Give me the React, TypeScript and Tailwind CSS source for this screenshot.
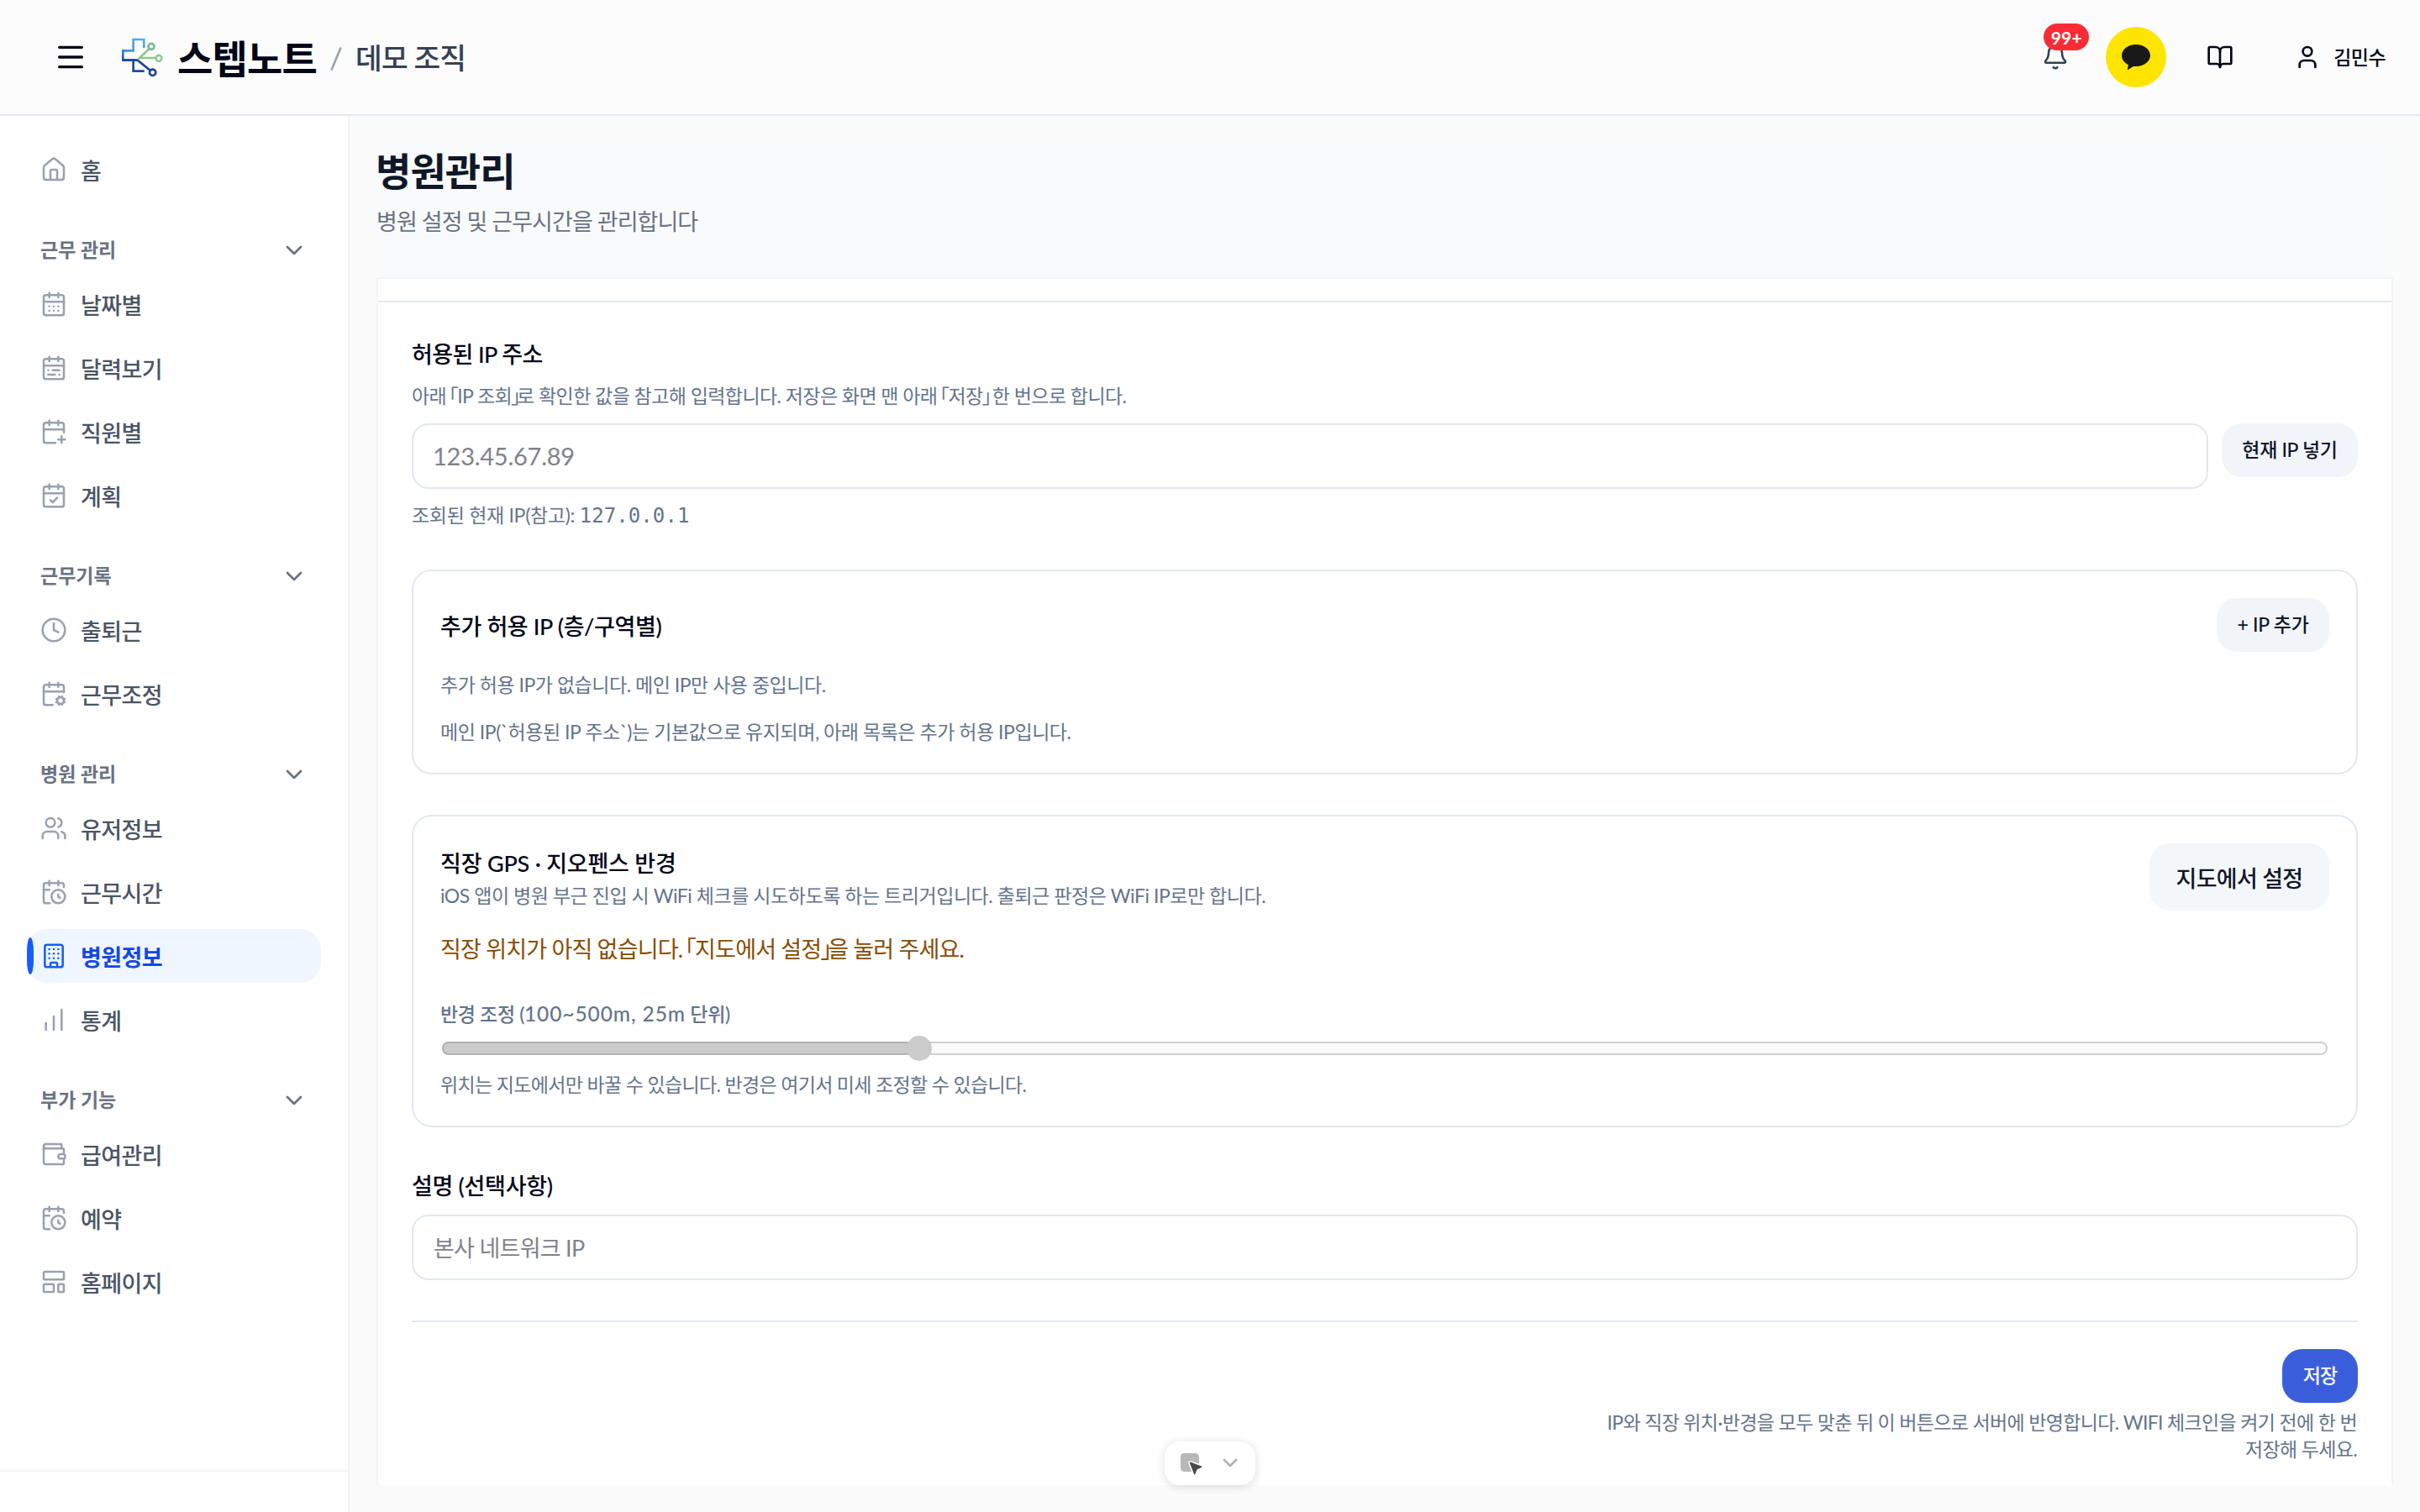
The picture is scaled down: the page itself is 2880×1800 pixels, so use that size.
import React from 'react';
import {
  Bell,
  BookOpen,
  Building,
  CalendarCheck,
  CalendarClock,
  CalendarCog,
  CalendarDays,
  CalendarPlus,
  CalendarRange,
  ChartNoAxesColumnIncreasing,
  ChevronDown,
  Clock,
  House,
  LayoutTemplate,
  Menu,
  User,
  Users,
  Wallet,
  type LucideIcon,
} from 'lucide-react';

type NavItem = { label: string; icon: LucideIcon; active?: boolean };
type NavGroup = { title: string; items: NavItem[] };

const groups: NavGroup[] = [
  {
    title: '근무 관리',
    items: [
      { label: '날짜별', icon: CalendarDays },
      { label: '달력보기', icon: CalendarRange },
      { label: '직원별', icon: CalendarPlus },
      { label: '계획', icon: CalendarCheck },
    ],
  },
  {
    title: '근무기록',
    items: [
      { label: '출퇴근', icon: Clock },
      { label: '근무조정', icon: CalendarCog },
    ],
  },
  {
    title: '병원 관리',
    items: [
      { label: '유저정보', icon: Users },
      { label: '근무시간', icon: CalendarClock },
      { label: '병원정보', icon: Building, active: true },
      { label: '통계', icon: ChartNoAxesColumnIncreasing },
    ],
  },
  {
    title: '부가 기능',
    items: [
      { label: '급여관리', icon: Wallet },
      { label: '예약', icon: CalendarClock },
      { label: '홈페이지', icon: LayoutTemplate },
    ],
  },
];

function Logo() {
  return (
    <svg viewBox="40 38 156 144" className="h-12 w-[52px]" fill="none" strokeWidth="8">
      <defs>
        <linearGradient id="cross" x1="125" y1="45" x2="48" y2="125" gradientUnits="userSpaceOnUse">
          <stop offset="0" stopColor="#4fb3ea" />
          <stop offset="0.6" stopColor="#3f9be0" />
          <stop offset="1" stopColor="#1d4fa8" />
        </linearGradient>
      </defs>
      <path d="M125 78V47H87V87H50V121H102" stroke="url(#cross)" />
      <path d="M87 121V160H126" stroke="#1c4a9e" />
      <path d="M50 121H102L147 157" stroke="#1c439c" />
      <circle cx="156" cy="165" r="11" stroke="#1c439c" />
      <path d="M103 119L144 80M106 113H166" stroke="#8cc98f" />
      <circle cx="151" cy="72" r="10.5" stroke="#84b596" />
      <circle cx="178" cy="114" r="10.5" stroke="#8fcb93" />
    </svg>
  );
}

function Header() {
  return (
    <header className="flex h-[138px] shrink-0 items-center border-b-2 border-[#e2e8f0] bg-[#fcfcfc] pr-10 pl-16 text-[#020617]">
      <Menu size={40} />
      <div className="ml-[39px]">
        <Logo />
      </div>
      <span className="ml-[16px] pt-[3px] text-[46px] leading-[64px] font-bold tracking-[-0.8px]">스텝노트</span>
      <svg viewBox="0 0 14 28" className="ml-[16px] mt-1 h-7 w-3.5" fill="none" stroke="#99a1af" strokeWidth="2.6">
        <path d="M12.6 0.5L1.4 27.5" />
      </svg>
      <span className="ml-[16px] pt-px text-[34.5px] leading-[48px] font-medium tracking-[-0.95px] text-[#364153]">
        데모 조직
      </span>

      <div className="ml-auto flex items-center">
        <div className="relative">
          <Bell size={32} strokeWidth={1.9} className="text-[#364153]" />
          <span className="absolute -top-6 left-0.5 flex h-8 w-[54px] items-center justify-center rounded-full bg-[#fb2c36] text-[21px] leading-none font-bold tracking-[0.2px] text-white">
            99+
          </span>
        </div>
        <div className="ml-11 flex size-[72px] items-center justify-center rounded-full bg-[#fee500]">
          <svg viewBox="0 0 34 30" className="h-[30px] w-[34px]" fill="#191919">
            <path d="M17 0C7.6 0 0 5.8 0 13.1c0 4.7 3.1 8.8 7.9 11.1L6.8 29.4c-.1.5.4.8.8.5l6.2-4c1 .15 2.1.2 3.2.2 9.4 0 17-5.8 17-13S26.4 0 17 0Z" />
          </svg>
        </div>
        <BookOpen size={32} className="ml-12" />
        <User size={32} className="ml-[72px]" />
        <span className="mr-px ml-[15px] text-[23px] leading-8 font-medium tracking-[-0.6px]">김민수</span>
      </div>
    </header>
  );
}

function NavRow({ label, icon: Icon, active }: NavItem) {
  return (
    <a
      className={
        active
          ? 'relative flex h-16 items-center gap-4 rounded-[24px] bg-[#eff6ff] pl-4 text-[27px] font-bold tracking-[-0.6px] text-[#1447e6]'
          : 'flex h-16 items-center gap-4 pl-4 text-[27px] font-medium tracking-[-0.6px] text-[#4a5565]'
      }
    >
      {active && <span className="absolute top-2.5 left-0 h-11 w-2 rounded-[4px/16px] bg-[#155dfc]" />}
      <Icon size={32} strokeWidth={1.9} className={active ? 'text-[#155dfc]' : 'text-[#99a1af]'} />
      <span className="pt-1">{label}</span>
    </a>
  );
}

function Sidebar() {
  return (
    <aside className="flex w-[416px] shrink-0 flex-col border-r-2 border-[#f3f4f6] bg-white">
      <nav className="flex grow flex-col pt-8 pr-8 pl-8">
        <NavRow label="홈" icon={House} />
        {groups.map((group) => (
          <section key={group.title} className="mt-11">
            <div className="flex h-10 items-center justify-between pr-4 pl-4 text-[23px] font-bold text-[#6a7282]">
              <span className="pb-0.5">{group.title}</span>
              <ChevronDown size={32} />
            </div>
            <div className="mt-3 flex flex-col gap-3">
              {group.items.map((item) => (
                <NavRow key={item.label} {...item} />
              ))}
            </div>
          </section>
        ))}
      </nav>
      <div className="h-[50px] shrink-0 border-t-2 border-[#f3f4f6]" />
    </aside>
  );
}

/* Corner brackets set at half width so that they sit tight against the quoted words. */
function Quote({ children }: { children: React.ReactNode }) {
  return (
    <>
      <span className="-mr-px ml-[3px] [font-feature-settings:'halt']">「</span>
      {children}
      <span className="-mr-1 -ml-px [font-feature-settings:'halt']">」</span>
    </>
  );
}

function HospitalForm() {
  return (
    <div className="flex flex-col px-10 pt-[42px] text-[23px] leading-8 text-[#64748b]">
      <label className="text-[27px] leading-10 font-medium tracking-[-0.6px] text-[#020617]">허용된 IP 주소</label>
      <p className="mt-[13px] tracking-[-0.57px]">
        아래<Quote>IP 조회</Quote>로 확인한 값을 참고해 입력합니다. 저장은 화면 맨 아래<Quote>저장</Quote> 한 번으로
        합니다.
      </p>
      <div className="mt-[17px] flex items-start gap-4">
        <div className="flex h-[78px] grow items-center rounded-[20px] border-2 border-[#e2e8f0] px-6 text-[29px] tracking-[-0.25px] text-[#808289]">
          <span className="-ml-px">123.45.67.89</span>
        </div>
        <button className="h-16 w-[162px] rounded-[24px] bg-[#f1f5f9] pb-[3px] font-medium tracking-[-0.35px] text-[#0f172a]">
          현재 IP 넣기
        </button>
      </div>
      <p className="mt-[15px] tracking-[-0.3px]">
        조회된 현재 IP(참고):{' '}
        <span className="font-['DejaVu_Sans_Mono',monospace] text-[24px] leading-none tracking-[0.1px]">127.0.0.1</span>
      </p>

      <section className="mt-[49px] rounded-[24px] border-2 border-[#e2e8f0] p-8">
        <div className="flex items-center justify-between">
          <h3 className="pt-1 text-[27px] leading-10 font-medium tracking-[-0.37px] text-[#020617]">
            추가 허용 IP (층/구역별)
          </h3>
          <button className="h-16 w-[134px] rounded-[24px] bg-[#f1f5f9] pb-0.5 font-medium tracking-[-0.3px] text-[#0f172a]">
            + IP 추가
          </button>
        </div>
        <p className="mt-[23px] tracking-[-0.48px]">추가 허용 IP가 없습니다. 메인 IP만 사용 중입니다.</p>
        <p className="mt-6 mb-px tracking-[-0.46px]">
          메인 IP(`허용된 IP 주소`)는 기본값으로 유지되며, 아래 목록은 추가 허용 IP입니다.
        </p>
      </section>

      <section className="mt-12 rounded-[24px] border-2 border-[#e2e8f0] px-8 pt-8 pb-[33px]">
        <div className="flex items-start justify-between">
          <div className="pt-1">
            <h3 className="text-[27px] leading-10 font-medium tracking-[-0.2px] text-[#020617]">
              직장 GPS · 지오펜스 반경
            </h3>
            <p className="-mb-px leading-9 tracking-[-0.46px]">
              iOS 앱이 병원 부근 진입 시 WiFi 체크를 시도하도록 하는 트리거입니다. 출퇴근 판정은 WiFi IP로만 합니다.
            </p>
          </div>
          <button className="h-20 w-[214px] rounded-[24px] bg-[#f4f7fa] pt-[3px] text-[27px] font-medium tracking-[-0.7px] text-[#0f172a]">
            지도에서 설정
          </button>
        </div>
        <p className="mt-[26px] text-[27px] leading-10 tracking-[-0.8px] text-[#894b00]">
          직장 위치가 아직 없습니다.<Quote>지도에서 설정</Quote>을 눌러 주세요.
        </p>
        <p className="mt-[41px] font-medium tracking-[-0.35px]">
          반경 조정 (<span className="text-[24.5px] tracking-[0.9px]">100~500m, 25m</span> 단위)
        </p>
        <div className="relative mt-[17px] mr-0.5 ml-0.5 flex h-4 items-center rounded-full border-2 border-[#cfcfcf] bg-[#fafafa]">
          <div className="absolute -top-0.5 -left-0.5 h-4 w-[569px] rounded-l-full border-2 border-r-0 border-[#b2b2b2] bg-[#cbcbcb]" />
          <div className="absolute -top-[9px] left-[551px] size-[30px] rounded-full bg-[#cbcbcb]" />
        </div>
        <p className="mt-[19px] tracking-[-0.66px]">
          위치는 지도에서만 바꿀 수 있습니다. 반경은 여기서 미세 조정할 수 있습니다.
        </p>
      </section>

      <label className="mt-[50px] text-[27px] leading-10 font-medium tracking-[-0.3px] text-[#020617]">
        설명 (선택사항)
      </label>
      <div className="mt-[14px] flex h-[78px] items-center rounded-[20px] border-2 border-[#e2e8f0] px-6 pt-px text-[27px] tracking-[-0.72px] text-[#808289]">
        본사 네트워크 IP
      </div>

      <div className="mt-12 flex flex-col items-end border-t-2 border-[#e2e8f0] pt-8 text-right">
        <button className="h-16 w-[90px] rounded-[24px] bg-[#3b5fdc] pb-[3px] font-medium tracking-[-1px] text-white">
          저장
        </button>
        <p className="mt-[7px] pr-px tracking-[-0.66px]">
          IP와 직장 위치·반경을 모두 맞춘 뒤 이 버튼으로 서버에 반영합니다. WIFI 체크인을 켜기 전에 한 번
          <br />
          저장해 두세요.
        </p>
      </div>
    </div>
  );
}

/* Small floating toolbar pinned to the bottom centre of the window. */
function FloatingTool() {
  return (
    <div className="absolute bottom-8 left-1/2 flex h-[52px] w-[108px] -translate-x-1/2 items-center rounded-[18px] bg-white pl-[19px] shadow-[0_2px_12px_rgba(0,0,0,0.14)]">
      <svg viewBox="0 0 27 27" className="mt-[3px] size-[27px]">
        <rect width="22" height="22" rx="4.5" fill="#b8b8b8" />
        <path
          d="M11.5 11.3L24.6 16.2L19 18.8L16.6 24.6Z"
          fill="#4a4a4a"
          stroke="#fff"
          strokeWidth="4.5"
          strokeLinejoin="round"
        />
        <path
          d="M11.5 11.3L24.6 16.2L19 18.8L16.6 24.6Z"
          fill="#4a4a4a"
          stroke="#4a4a4a"
          strokeWidth="1.5"
          strokeLinejoin="round"
        />
      </svg>
      <svg viewBox="0 0 18 12" className="ml-[23px] h-3 w-[18px]" fill="none" stroke="#b3b3b3" strokeWidth="2.8">
        <path d="M2 2L9 9L16 2" strokeLinecap="round" strokeLinejoin="round" />
      </svg>
    </div>
  );
}

export default function App() {
  return (
    <div className="relative flex h-screen w-full flex-col overflow-hidden bg-[#fbfbfb] font-[Lato,'Noto_Sans_CJK_KR',sans-serif]">
      <Header />
      <div className="flex min-h-0 grow">
        <Sidebar />
        <main className="flex min-w-0 grow flex-col p-8">
          <div className="flex h-40 shrink-0 flex-col bg-[#f9fafc] pt-0.5">
            <h1 className="-ml-px text-[46px] leading-[64px] font-bold tracking-[-0.9px] text-[#101828]">병원관리</h1>
            <p className="mt-2 text-[27px] leading-10 tracking-[-0.95px] text-[#6a7282]">
              병원 설정 및 근무시간을 관리합니다
            </p>
          </div>
          <div className="min-h-0 grow overflow-hidden border-2 border-b-0 border-[#f3f4f6] bg-white">
            <div className="h-7 border-b-2 border-[#e2e8f0]" />
            <HospitalForm />
          </div>
        </main>
      </div>
      <FloatingTool />
    </div>
  );
}
